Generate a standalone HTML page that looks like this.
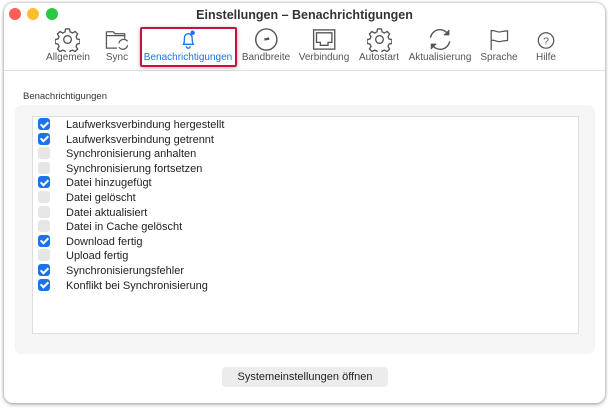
<!DOCTYPE html>
<html><head><meta charset="utf-8"><style>
*{margin:0;padding:0;box-sizing:border-box}
body{width:610px;height:408px;background:#fff;font-family:"Liberation Sans",sans-serif;position:relative;overflow:hidden}
.win{position:absolute;left:4px;top:3px;width:601px;height:400px;background:#fff;border-radius:9px;box-shadow:0 0 3px rgba(0,0,0,.35),0 2px 4px rgba(0,0,0,.2)}
.tl{position:absolute;top:5px;width:12px;height:12px;border-radius:50%}
.title{position:absolute;top:5px;left:0;width:601px;text-align:center;font-size:12.5px;font-weight:bold;color:#333}
.tb{position:absolute;top:22px;left:0;width:601px;height:46px;border-bottom:1px solid #e2e2e2}
.it{position:absolute;top:0;text-align:center;font-size:10px;color:#555;transform:translateX(-50%);white-space:nowrap}
.it svg{display:block;margin:2px auto 0;width:25px;height:25px}
.it span{display:block;margin-top:0}
.sel{position:absolute;left:136px;top:24px;width:97px;height:40px;border:2px solid #c8103e;border-radius:2px;box-shadow:0 1px 4px rgba(0,0,0,.3)}
.lbl{position:absolute;left:19px;top:88px;font-size:9.5px;color:#333}
.grp{position:absolute;left:11px;top:102px;width:580px;height:249px;background:#f5f5f5;border-radius:7px}
.list{position:absolute;left:28px;top:113px;width:547px;height:218px;background:#fff;border:1px solid #ddd}
.row{position:absolute;left:5px;height:14px;font-size:11px;color:#222;line-height:14px}
.cb{position:absolute;left:0;top:0;width:12px;height:12px;border-radius:3px;background:#e6e6e6}
.cb.on{background:#1a73e8}
.cb.on:after{content:"";position:absolute;left:4px;top:1.5px;width:3px;height:6px;border:solid #fff;border-width:0 2px 2px 0;transform:rotate(45deg)}
.row b{font-weight:normal;position:absolute;left:28px;white-space:nowrap}
.btn{position:absolute;left:218px;top:364px;width:166px;height:20px;background:#ececec;border-radius:4px;font-size:11px;text-align:center;line-height:20px;color:#222}
</style></head><body>
<div class="win">
<div class="tl" style="left:5px;background:#fe5f57"></div>
<div class="tl" style="left:23px;background:#febc2e"></div>
<div class="tl" style="left:42px;background:#28c840"></div>
<div class="title">Einstellungen – Benachrichtigungen</div>
<div class="tb">
<div class="it" style="left:64px"><svg viewBox="0 0 26 26" fill="none" stroke="#555" stroke-width="1.4"><path d="M11 2h4l.7 3 2.5 1.2 2.7-1.6 2.6 2.7-1.6 2.7 1 2.5 3 .6v4l-3 .7-1 2.5 1.6 2.7-2.7 2.6-2.6-1.6-2.5 1-.7 3h-4l-.6-3-2.5-1-2.7 1.6-2.6-2.7 1.6-2.6-1.1-2.5-3-.7v-4l3-.6 1-2.5-1.6-2.7 2.7-2.6 2.7 1.6 2.4-1.2z"/><circle cx="13" cy="13" r="4"/></svg><span>Allgemein</span></div>
<div class="it" style="left:113px"><svg viewBox="0 0 26 26" fill="none" stroke="#555" stroke-width="1.3"><path d="M2 5h7l2 2h10v5M2 5v17h11M2 9h19"/><path d="M15 17a5 5 0 0 1 9-2M24 19a5 5 0 0 1-9 2"/></svg><span>Sync</span></div>
<div class="it" style="left:184px;color:#1a73e8"><svg viewBox="0 0 26 26" fill="none" stroke="#1a73e8" stroke-width="1.4"><path d="M8 18c1-2 1-4 1-7a4 4 0 0 1 8 0c0 3 0 5 1 7zM11 20a2 2 0 0 0 4 0"/><circle cx="17.5" cy="6" r="2.3" fill="#1a73e8" stroke="none"/></svg><span>Benachrichtigungen</span></div>
<div class="it" style="left:262px"><svg viewBox="0 0 26 26" fill="none" stroke="#555" stroke-width="1.5"><circle cx="13" cy="13" r="11"/><path d="M11 13l5-1" stroke-width="2.5"/></svg><span>Bandbreite</span></div>
<div class="it" style="left:320px"><svg viewBox="0 0 26 26" fill="none" stroke="#555" stroke-width="1.4"><rect x="2" y="3" width="22" height="20"/><path d="M5 6h16v10h-4v3h-8v-3h-4z"/></svg><span>Verbindung</span></div>
<div class="it" style="left:375px"><svg viewBox="0 0 26 26" fill="none" stroke="#555" stroke-width="1.4"><path d="M11 2h4l.7 3 2.5 1.2 2.7-1.6 2.6 2.7-1.6 2.7 1 2.5 3 .6v4l-3 .7-1 2.5 1.6 2.7-2.7 2.6-2.6-1.6-2.5 1-.7 3h-4l-.6-3-2.5-1-2.7 1.6-2.6-2.7 1.6-2.6-1.1-2.5-3-.7v-4l3-.6 1-2.5-1.6-2.7 2.7-2.6 2.7 1.6 2.4-1.2z"/><circle cx="13" cy="13" r="4"/></svg><span>Autostart</span></div>
<div class="it" style="left:436px"><svg viewBox="0 0 26 26" fill="none" stroke="#555" stroke-width="1.4"><path d="M3 11a10 10 0 0 1 18-4M23 15a10 10 0 0 1-18 4"/><path d="M22 3v5h-5M4 23v-5h5" fill="#555"/></svg><span>Aktualisierung</span></div>
<div class="it" style="left:495px"><svg viewBox="0 0 26 26" fill="none" stroke="#555" stroke-width="1.3"><path d="M5 3v21M5 4c4-1 6 2 10 1s5-1 7-1v10c-2 0-3 0-7 1s-6-2-10-1"/></svg><span>Sprache</span></div>
<div class="it" style="left:542px"><svg viewBox="0 0 26 26" fill="none" stroke="#555" stroke-width="1.3"><circle cx="13" cy="14" r="8"/><text x="13" y="18" font-size="11" text-anchor="middle" fill="#555" stroke="none" font-family="Liberation Sans">?</text></svg><span>Hilfe</span></div>
</div>
<div class="sel"></div>
<div class="lbl">Benachrichtigungen</div>
<div class="grp"></div>
<div class="list">
<div class="row" style="top:1px"><i class="cb on"></i><b>Laufwerksverbindung hergestellt</b></div>
<div class="row" style="top:15.6px"><i class="cb on"></i><b>Laufwerksverbindung getrennt</b></div>
<div class="row" style="top:30.2px"><i class="cb"></i><b>Synchronisierung anhalten</b></div>
<div class="row" style="top:44.8px"><i class="cb"></i><b>Synchronisierung fortsetzen</b></div>
<div class="row" style="top:59.4px"><i class="cb on"></i><b>Datei hinzugefügt</b></div>
<div class="row" style="top:74px"><i class="cb"></i><b>Datei gelöscht</b></div>
<div class="row" style="top:88.6px"><i class="cb"></i><b>Datei aktualisiert</b></div>
<div class="row" style="top:103.2px"><i class="cb"></i><b>Datei in Cache gelöscht</b></div>
<div class="row" style="top:117.8px"><i class="cb on"></i><b>Download fertig</b></div>
<div class="row" style="top:132.4px"><i class="cb"></i><b>Upload fertig</b></div>
<div class="row" style="top:147px"><i class="cb on"></i><b>Synchronisierungsfehler</b></div>
<div class="row" style="top:161.6px"><i class="cb on"></i><b>Konflikt bei Synchronisierung</b></div>
</div>
<div class="btn">Systemeinstellungen öffnen</div>
</div>
</body></html>
